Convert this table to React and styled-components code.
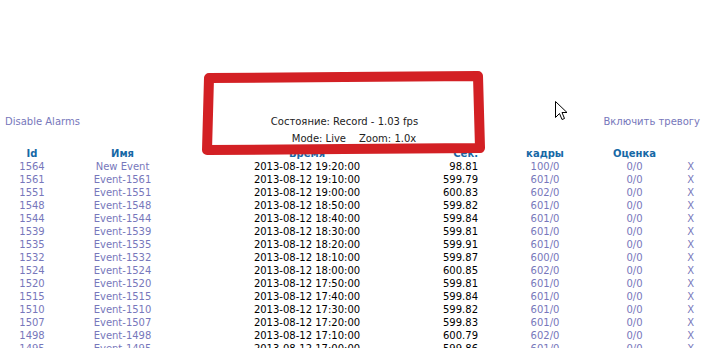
import React from "react";
import styled, { createGlobalStyle } from "styled-components";

const Global = createGlobalStyle`
  html, body { margin: 0; padding: 0; background: #fff; overflow: hidden; }
  body { font-family: "DejaVu Sans", Verdana, sans-serif; font-size: 10px; color: #000; }
`;

const Page = styled.div`
  position: relative;
  width: 708px;
  height: 348px;
  padding-top: 113px;
  box-sizing: border-box;
`;

const TopBar = styled.div`
  display: grid;
  grid-template-columns: 1fr auto 1fr;
  align-items: start;
  line-height: 17px;
`;

const Link = styled.a`
  color: #7777bb;
  text-decoration: none;
  cursor: pointer;
  justify-self: ${(p) => (p.$right ? "end" : "start")};
  padding: ${(p) => (p.$right ? "0 8px 0 0" : "0 0 0 5px")};
`;

const Status = styled.div`
  display: flex;
  flex-direction: column;
  align-items: center;
  color: #222;
`;

const StatusLine = styled.div`
  display: flex;
  gap: 13px;
  margin-right: ${(p) => p.$shift || 0}px;
  margin-left: ${(p) => p.$push || 0}px;
`;

const Table = styled.div`
  display: grid;
  grid-template-columns: 64px 117px 252px 45px 134px 45px 1fr;
  grid-auto-rows: 13px;
  line-height: 13px;
`;

const Head = styled.div`
  font-weight: bold;
  color: #1668a6;
  text-align: ${(p) => p.$align || "center"};
  padding-right: ${(p) => p.$pr || 0}px;
  white-space: nowrap;
`;

const Cell = styled.div`
  text-align: ${(p) => p.$align || "center"};
  color: ${(p) => (p.$link ? "#7777bb" : "#000")};
  padding-right: ${(p) => p.$pr || 0}px;
  white-space: nowrap;
`;

const Overlay = styled.svg`
  position: absolute;
  left: 0;
  top: 0;
  pointer-events: none;
`;

const rows = [
  ["1564", "New Event", "19:20:00", "98.81", "100/0"],
  ["1561", "Event-1561", "19:10:00", "599.79", "601/0"],
  ["1551", "Event-1551", "19:00:00", "600.83", "602/0"],
  ["1548", "Event-1548", "18:50:00", "599.82", "601/0"],
  ["1544", "Event-1544", "18:40:00", "599.84", "601/0"],
  ["1539", "Event-1539", "18:30:00", "599.81", "601/0"],
  ["1535", "Event-1535", "18:20:00", "599.91", "601/0"],
  ["1532", "Event-1532", "18:10:00", "599.87", "600/0"],
  ["1524", "Event-1524", "18:00:00", "600.85", "602/0"],
  ["1520", "Event-1520", "17:50:00", "599.81", "601/0"],
  ["1515", "Event-1515", "17:40:00", "599.84", "601/0"],
  ["1510", "Event-1510", "17:30:00", "599.82", "601/0"],
  ["1507", "Event-1507", "17:20:00", "599.83", "601/0"],
  ["1498", "Event-1498", "17:10:00", "600.79", "602/0"],
  ["1495", "Event-1495", "17:00:00", "599.86", "601/0"],
];

export default function App() {
  return (
    <>
      <Global />
      <Page>
        <TopBar>
          <Link>Disable Alarms</Link>
          <Status>
            <StatusLine $shift={19}>Состояние: Record - 1.03 fps</StatusLine>
            <StatusLine>
              <span>Mode: Live</span>
              <span>Zoom: 1.0x</span>
            </StatusLine>
          </Status>
          <Link $right>Включить тревогу</Link>
        </TopBar>
        <Table>
          <Head>Id</Head>
          <Head>Имя</Head>
          <Head>Время</Head>
          <Head $align="right">Сек.</Head>
          <Head>кадры</Head>
          <Head>Оценка</Head>
          <Head />
          {rows.map((r) => (
            <React.Fragment key={r[0]}>
              <Cell $link>{r[0]}</Cell>
              <Cell $link>{r[1]}</Cell>
              <Cell>2013-08-12 {r[2]}</Cell>
              <Cell $align="right">{r[3]}</Cell>
              <Cell $link>{r[4]}</Cell>
              <Cell $link>0/0</Cell>
              <Cell $link $align="right" $pr={14}>X</Cell>
            </React.Fragment>
          ))}
        </Table>
        <Overlay width="708" height="348" viewBox="0 0 708 348">
          <path
            d="M209 78 L344 77 L478 76 L479 112 L480 148 L344 149 L207 150 L208 114 Z"
            fill="none"
            stroke="#d32024"
            strokeWidth="10"
            strokeLinejoin="round"
          />
          <path
            d="M555.5 101.5 L555.5 117.5 L559.5 113.5 L562 119.5 L564.5 118.5 L562 112.5 L567 112.5 Z"
            fill="#fff"
            stroke="#000"
            strokeWidth="1"
            strokeLinejoin="miter"
          />
        </Overlay>
      </Page>
    </>
  );
}
